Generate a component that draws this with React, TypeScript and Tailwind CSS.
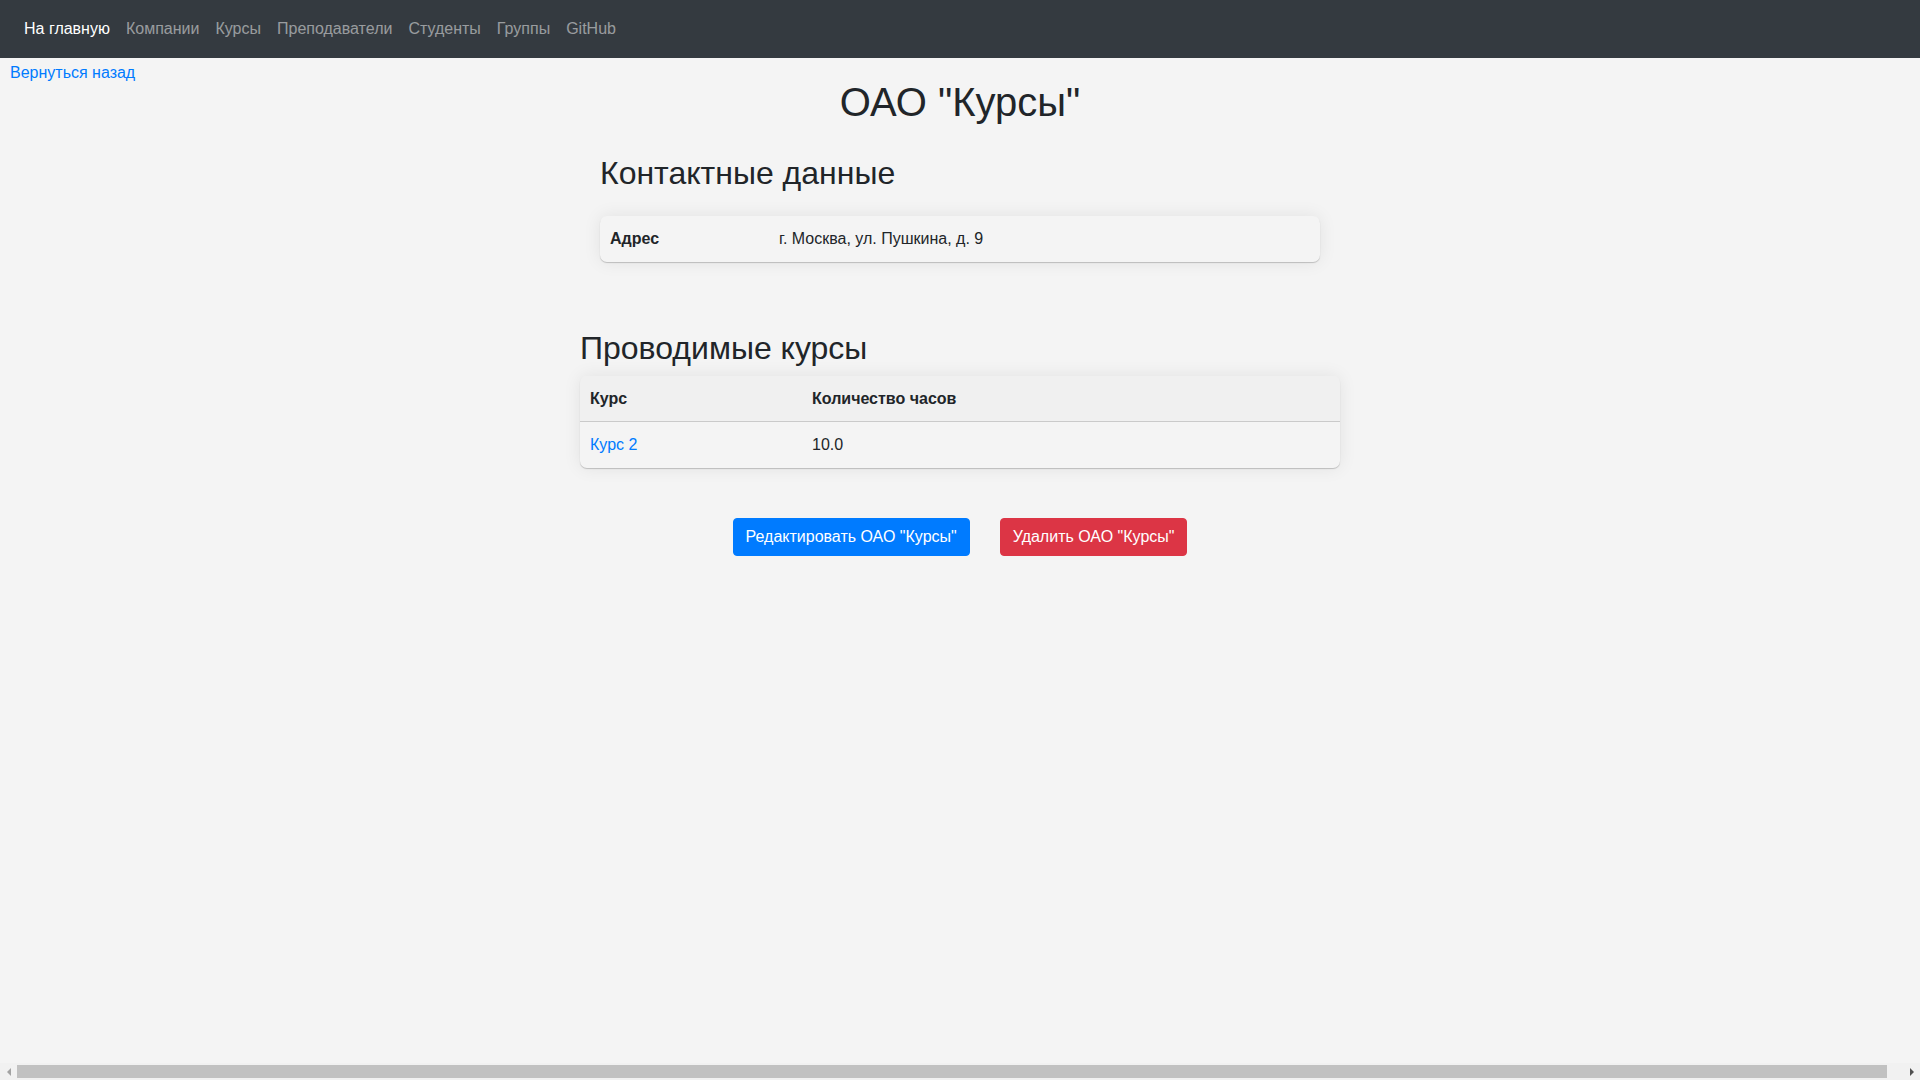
import React from 'react';

const navLinks = [
    { label: 'На главную', active: true },
    { label: 'Компании' },
    { label: 'Курсы' },
    { label: 'Преподаватели' },
    { label: 'Студенты' },
    { label: 'Группы' },
    { label: 'GitHub' },
];

const cardShadow = 'shadow-[0_1px_1px_rgba(0,0,0,0.2),0_0_18px_rgba(0,0,0,0.08)]';

const Navbar: React.FC = () => (
    <nav className="h-[58px] shrink-0 bg-[#343a40] flex items-center px-4">
        {navLinks.map(link => (
            <a
                key={link.label}
                href="#"
                className={`px-2 text-base leading-6 ${link.active ? 'text-white' : 'text-white/50'}`}
            >
                {link.label}
            </a>
        ))}
    </nav>
);

const FakeScrollbar: React.FC = () => (
    <div className="h-[17px] shrink-0 bg-[#f1f1f1] flex items-center">
        <div className="w-[17px] h-full flex items-center justify-center">
            <div className="w-0 h-0 border-y-[4px] border-y-transparent border-r-[4px] border-r-[#a3a3a3]" />
        </div>
        <div className="flex-1 h-[13px] bg-[#c1c1c1]" />
        <div className="w-[16px]" />
        <div className="w-[17px] h-full flex items-center justify-center">
            <div className="w-0 h-0 border-y-[4px] border-y-transparent border-l-[4px] border-l-[#505050]" />
        </div>
    </div>
);

const App: React.FC = () => {
    return (
        <div className="h-screen flex flex-col overflow-hidden bg-[#f4f4f4] text-[#212529] font-['Liberation_Sans',Arial,sans-serif]">
            <Navbar />
            <main className="flex-1">
                <div className="h-[20px] pt-[3px] pl-[10px]">
                    <a href="#" className="block text-base leading-6 text-[#007bff]">Вернуться назад</a>
                </div>
                <h1 className="text-center text-[40px] leading-[48px]">ОАО "Курсы"</h1>

                <section className="w-[720px] mx-auto mt-[28px]">
                    <h2 className="text-[32px] leading-[38px]">Контактные данные</h2>
                    <div className={`mt-[24px] rounded-[7px] bg-[#f4f4f4] ${cardShadow}`}>
                        <div className="grid grid-cols-[168px_1fr] h-[46px] items-center px-[10px] text-base leading-6">
                            <span className="font-bold">Адрес</span>
                            <span className="pl-px">г. Москва, ул. Пушкина, д. 9</span>
                        </div>
                    </div>
                </section>

                <section className="w-[760px] mx-auto mt-[67px]">
                    <h2 className="text-[32px] leading-[38px]">Проводимые курсы</h2>
                    <div className={`mt-[9px] rounded-[7px] bg-[#f4f4f4] overflow-hidden ${cardShadow}`}>
                        <div className="grid grid-cols-[221px_1fr] h-[46px] items-center px-[10px] bg-[#f0f0f0] border-b border-[#cacaca] font-bold text-base leading-6">
                            <span>Курс</span>
                            <span className="pl-px">Количество часов</span>
                        </div>
                        <div className="grid grid-cols-[221px_1fr] h-[46px] items-center px-[10px] text-base leading-6">
                            <a href="#" className="text-[#007bff]">Курс 2</a>
                            <span className="pl-px">10.0</span>
                        </div>
                    </div>
                </section>

                <div className="mt-[50px] flex justify-center gap-[30px]">
                    <button className="h-[38px] px-3 rounded bg-[#007bff] border border-[#007bff] text-white text-base leading-6">
                        Редактировать ОАО "Курсы"
                    </button>
                    <button className="h-[38px] px-3 rounded bg-[#dc3545] border border-[#dc3545] text-white text-base leading-6">
                        Удалить ОАО "Курсы"
                    </button>
                </div>
            </main>
            <FakeScrollbar />
        </div>
    );
};

export default App;
